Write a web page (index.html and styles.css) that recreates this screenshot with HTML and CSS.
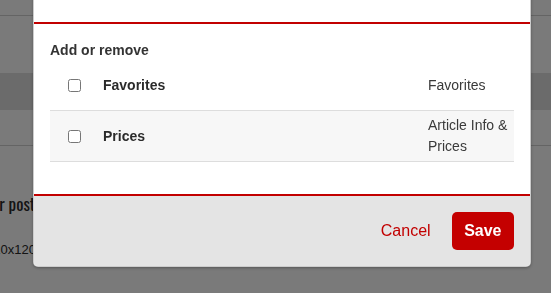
FILE: index.html
```html
<!DOCTYPE html>
<html lang="en">
<head>
<meta charset="utf-8">
<title>Add or remove</title>
<link rel="stylesheet" href="styles.css">
</head>
<body>
<div class="page">
  <div class="page-top"></div>
  <div class="page-gap"></div>
  <div class="page-band"></div>
  <div class="page-row"></div>
  <div class="page-form">
    <div class="page-label-wrap"><span class="page-label">Title for your post</span></div>
    <div class="page-size">320x120 px</div>
  </div>
</div>

<div class="overlay"></div>

<div class="modal">
  <div class="modal-header">
    <h2 class="modal-title">Article Sections</h2>
  </div>
  <div class="modal-body">
    <h3 class="section-title">Add or remove</h3>
    <div class="list">
      <div class="list-row">
        <div class="cell-check"><input type="checkbox" class="check"></div>
        <div class="cell-name">Favorites</div>
        <div class="cell-group">Favorites</div>
      </div>
      <div class="list-row list-row-alt">
        <div class="cell-check"><input type="checkbox" class="check"></div>
        <div class="cell-name">Prices</div>
        <div class="cell-group">Article Info &amp; Prices</div>
      </div>
    </div>
  </div>
  <div class="modal-footer">
    <span class="btn-cancel">Cancel</span>
    <button class="btn-save">Save</button>
  </div>
</div>
</body>
</html>
```

FILE: styles.css
```css
html, body {
  margin: 0;
  padding: 0;
}

body {
  font-family: "Liberation Sans", Arial, sans-serif;
  color: #333;
  background: #fff;
  overflow: hidden;
  width: 551px;
  height: 293px;
}

/* page behind the dialog */
.page {
  height: 293px;
  background: #fff;
}

.page-top {
  height: 15px;
  border-bottom: 1px solid #d2d2d2;
}

.page-gap {
  height: 57px;
}

.page-band {
  height: 37px;
  background: #e0e0e0;
}

.page-row {
  height: 35px;
  border-bottom: 1px solid #d2d2d2;
}

.page-form {
  color: #2a2a2a;
}

.page-label-wrap {
  display: flex;
  justify-content: flex-end;
  width: 35px;
  margin-top: 46px;
  height: 24px;
  white-space: nowrap;
}

.page-label {
  font-family: "Oswald", "DejaVu Sans Condensed", "Liberation Sans Narrow", "Liberation Sans", sans-serif;
  font-stretch: condensed;
  font-size: 17px;
  line-height: 24px;
}

.page-size {
  margin-top: 24px;
  margin-left: -14px;
  font-size: 13px;
  line-height: 20px;
  white-space: nowrap;
}

/* backdrop */
.overlay {
  position: fixed;
  inset: 0;
  background: rgba(0, 0, 0, 0.52);
}

/* dialog */
.modal {
  position: absolute;
  left: 33px;
  top: -34px;
  width: 498px;
  box-sizing: border-box;
  background: #fff;
  border: 1px solid rgba(0, 0, 0, 0.2);
  border-radius: 5px;
  box-shadow: 0 1px 3px rgba(0, 0, 0, 0.3);
  overflow: hidden;
}

.modal-header {
  padding: 14px 16px 19px;
  border-bottom: 2px solid #c20000;
}

.modal-title {
  margin: 0;
  font-size: 18px;
  line-height: 22px;
  font-weight: normal;
  color: #333;
}

.modal-body {
  padding: 16px 16px;
}

.section-title {
  margin: 0;
  font-size: 14px;
  line-height: 20px;
  font-weight: bold;
  color: #333;
}

.list {
  margin-bottom: 16px;
}

.list-row {
  display: grid;
  grid-template-columns: 45px 1fr 94px;
  align-items: center;
  min-height: 50px;
  border-bottom: 1px solid #dddddd;
  font-size: 14px;
  line-height: 21px;
}

.list-row-alt {
  background: #f7f7f7;
}

.cell-check {
  padding-left: 18px;
  display: flex;
  align-items: center;
}

.check {
  margin: 0;
  width: 13px;
  height: 13px;
}

.cell-name {
  padding-left: 8px;
  font-weight: bold;
  color: #2b2b2b;
}

.cell-group {
  padding: 4px 4px 4px 8px;
  color: #3a3a3a;
}

.modal-footer {
  display: flex;
  justify-content: flex-end;
  align-items: center;
  gap: 21px;
  padding: 16px;
  background: #e4e4e4;
  border-top: 2px solid #c20000;
}

.btn-cancel {
  font-size: 16px;
  color: #c20000;
  line-height: 20px;
}

.btn-save {
  height: 38px;
  padding: 0 12.5px;
  border: none;
  border-radius: 5px;
  background: #c40000;
  color: #fff;
  font-family: "Liberation Sans", Arial, sans-serif;
  font-size: 16px;
  font-weight: bold;
}
```
